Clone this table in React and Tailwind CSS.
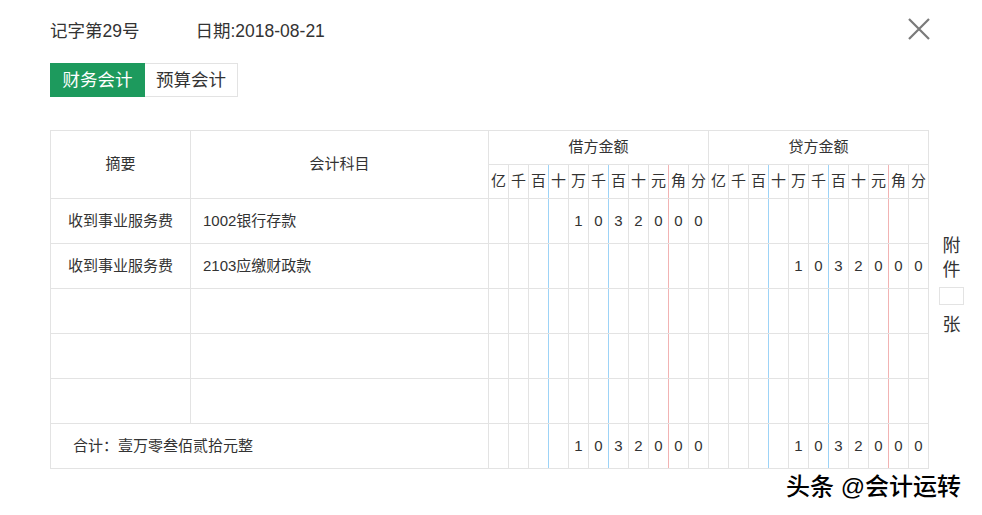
import React from "react";

const units = ["亿", "千", "百", "十", "万", "千", "百", "十", "元", "角", "分"];
const F = { fontFamily: '"Liberation Sans","Noto Sans CJK SC",sans-serif' };

function lineCls(i) {
  // with border-collapse, the left cell's right border wins
  if (i === 2 || i === 5) return "border-r-[#9dd3f7]";
  if (i === 8) return "border-r-[#f2b3b3]";
  return "";
}

function DigitCells({ digits }) {
  return digits.map((d, i) => (
    <td
      key={i}
      className={`border border-[#e3e3e3] ${lineCls(i)} text-center text-[15px] text-[#333] p-0`}
    >
      {d}
    </td>
  ));
}

const empty = Array(11).fill("");
const amt = ["", "", "", "", "1", "0", "3", "2", "0", "0", "0"];

export default function App() {
  const rows = [
    { a: "收到事业服务费", b: "1002银行存款", d: amt, c: empty },
    { a: "收到事业服务费", b: "2103应缴财政款", d: empty, c: amt },
    { a: "", b: "", d: empty, c: empty },
    { a: "", b: "", d: empty, c: empty },
    { a: "", b: "", d: empty, c: empty },
  ];
  return (
    <div className="relative w-[982px] h-[515px] bg-white text-[#333] overflow-hidden" style={F}>
      <div className="pl-[50px] pt-[20px]">
        <div className="flex items-center h-[22px] text-[17.5px] text-[#333]">
          <span>记字第29号</span>
          <span className="ml-[56px]">日期:2018-08-21</span>
        </div>
        <div className="flex mt-[21px] h-[34px] text-[17.5px]">
          <div className="w-[95px] bg-[#1d9a5d] text-white flex items-center justify-center">财务会计</div>
          <div className="w-[93px] border border-l-0 border-[#e3e3e3] flex items-center justify-center text-[#333]">预算会计</div>
        </div>
        <div className="flex mt-[33px]">
          <table className="table-fixed border-collapse border border-[#e3e3e3] w-[879px]">
            <colgroup>
              <col className="w-[140px]" />
              <col className="w-[298px]" />
              {Array.from({ length: 22 }).map((_, i) => (
                <col key={i} className="w-[20px]" />
              ))}
            </colgroup>
            <thead>
              <tr className="h-[34px]">
                <th rowSpan={2} className="border border-[#e3e3e3] font-normal text-[15px] text-center">摘要</th>
                <th rowSpan={2} className="border border-[#e3e3e3] font-normal text-[15px] text-center">会计科目</th>
                <th colSpan={11} className="border border-[#e3e3e3] font-normal text-[15px] text-center">借方金额</th>
                <th colSpan={11} className="border border-[#e3e3e3] font-normal text-[15px] text-center">贷方金额</th>
              </tr>
              <tr className="h-[34px]">
                {[...units, ...units].map((u, i) => (
                  <th
                    key={i}
                    className={`border border-[#e3e3e3] ${lineCls(i % 11)} font-normal text-[15px] text-center p-0`}
                  >
                    {u}
                  </th>
                ))}
              </tr>
            </thead>
            <tbody>
              {rows.map((r, idx) => (
                <tr key={idx} className="h-[45px]">
                  <td className="border border-[#e3e3e3] text-[15px] text-center">{r.a}</td>
                  <td className="border border-[#e3e3e3] text-[15px] pl-[12px]">{r.b}</td>
                  <DigitCells digits={r.d} />
                  <DigitCells digits={r.c} />
                </tr>
              ))}
              <tr className="h-[45px]">
                <td colSpan={2} className="border border-[#e3e3e3] text-[15px] pl-[22px]">合计：壹万零叁佰贰拾元整</td>
                <DigitCells digits={amt} />
                <DigitCells digits={amt} />
              </tr>
            </tbody>
          </table>
          <div className="ml-[10px] mt-[104px] flex flex-col items-center w-[25px] text-[18px] text-[#333] leading-[24px]">
            <span>附</span>
            <span>件</span>
            <div className="w-[25px] h-[18px] border border-[#e3e3e3] my-[5px]"></div>
            <span className="mt-[3px]">张</span>
          </div>
        </div>
      </div>
      <button className="absolute left-[906px] top-[16px] w-[26px] h-[26px]">
        <svg viewBox="0 0 26 26" width="26" height="26">
          <path d="M3 3 L23 23 M23 3 L3 23" stroke="#7a7a7a" strokeWidth="2.2" fill="none" />
        </svg>
      </button>
      <div
        className="absolute left-[786px] top-[471px] text-[24px] leading-[32px] text-black font-medium"
        style={{ textShadow: "1px 1px 0 #fff, -1px -1px 0 #fff, 1px -1px 0 #fff, -1px 1px 0 #fff" }}
      >
        头条 @会计运转
      </div>
    </div>
  );
}
